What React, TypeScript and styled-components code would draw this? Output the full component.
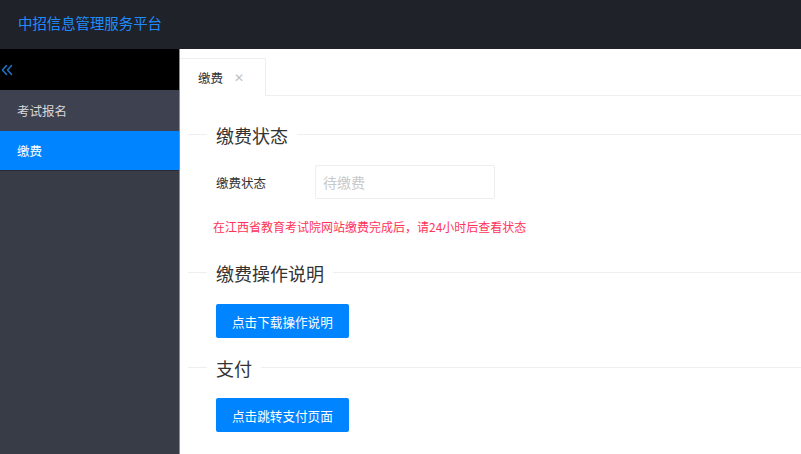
import React from "react";
import styled, { createGlobalStyle } from "styled-components";

const Global = createGlobalStyle`
  html, body { margin: 0; padding: 0; }
  body {
    font-family: "Noto Sans CJK SC", "Noto Sans", "Liberation Sans", sans-serif;
    background: #fff;
    color: #333;
  }
  * { box-sizing: border-box; }
`;

const Page = styled.div`
  width: 801px;
  height: 454px;
  display: flex;
  flex-direction: column;
  overflow: hidden;
`;

const Header = styled.header`
  height: 49px;
  flex: none;
  background: #20222a;
  display: flex;
  align-items: center;
  padding-left: 18px;
`;

const Logo = styled.div`
  color: #1e8cff;
  font-size: 14.4px;
  line-height: 20px;
  margin-top: -4px;
`;

const Body = styled.div`
  flex: 1;
  display: flex;
  min-height: 0;
`;

const Side = styled.aside`
  width: 180px;
  flex: none;
  background: #383c47;
  border-right: 1px solid #8a8d94;
  display: flex;
  flex-direction: column;
`;

const Collapse = styled.div`
  height: 41px;
  background: #000;
  display: flex;
  align-items: center;
  padding-left: 1px;
  svg { display: block; }
`;

const NavItem = styled.div<{ $active?: boolean }>`
  height: ${(p) => (p.$active ? "40px" : "41px")};
  display: flex;
  align-items: center;
  padding-left: 17px;
  font-size: 12.5px;
  color: ${(p) => (p.$active ? "#fff" : "#d8d9dc")};
  background: ${(p) => (p.$active ? "#0084ff" : "#3e4250")};
  border-bottom: ${(p) => (p.$active ? "1px solid #2a2d36" : "none")};
`;

const Main = styled.main`
  flex: 1;
  display: flex;
  flex-direction: column;
  background: #fff;
`;

const TabBar = styled.div`
  margin-top: 9px;
  height: 38px;
  display: flex;
  border-bottom: 1px solid #eeeeee;
`;

const Tab = styled.div`
  width: 86px;
  height: 38px;
  border-top: 1px solid #eeeeee;
  border-right: 1px solid #eeeeee;
  background: #fff;
  margin-bottom: -1px;
  display: flex;
  align-items: center;
  padding-left: 18px;
  font-size: 12.5px;
  color: #333;
`;

const Close = styled.span`
  margin-left: 11px;
  color: #c2c2c2;
  font-family: "DejaVu Sans", sans-serif;
  font-size: 12px;
`;

const Content = styled.div`
  padding: 27px 0 0 8px;
  display: flex;
  flex-direction: column;
`;

const Legend = styled.div<{ $mt?: number }>`
  display: flex;
  align-items: center;
  height: 24px;
  margin-top: ${(p) => p.$mt ?? 0}px;
  font-size: 18px;
  color: #333;
  &::before {
    content: "";
    width: 19px;
    height: 1px;
    background: #eeeeee;
    margin-top: -1px;
  }
  &::after {
    content: "";
    flex: 1;
    height: 1px;
    background: #eeeeee;
    margin-top: -1px;
  }
  span {
    padding: 0 9px;
  }
`;

const Inner = styled.div<{ $mt?: number }>`
  padding-left: 28px;
  margin-top: ${(p) => p.$mt ?? 0}px;
  display: flex;
  align-items: center;
`;

const Label = styled.label`
  width: 99px;
  font-size: 12.5px;
  color: #333;
`;

const Input = styled.input`
  width: 180px;
  height: 34px;
  border: 1px solid #eeeeee;
  border-radius: 2px;
  padding: 0 7px;
  font-family: inherit;
  font-size: 14px;
  color: #333;
  outline: none;
  &::placeholder { color: #c9c9c9; }
`;

const Notice = styled.div`
  margin-top: 18px;
  padding-left: 25px;
  font-size: 12px;
  line-height: 20px;
  color: #ff3358;
`;

const Button = styled.button`
  height: 34px;
  padding: 0 16px;
  border: none;
  border-radius: 2px;
  background: #0084ff;
  color: #fff;
  font-family: inherit;
  font-size: 12.6px;
  cursor: pointer;
`;

export default function App() {
  return (
    <Page>
      <Global />
      <Header>
        <Logo>中招信息管理服务平台</Logo>
      </Header>
      <Body>
        <Side>
          <Collapse>
            <svg width="12" height="12" viewBox="0 0 12 12" fill="none" stroke="#1f72c4" strokeWidth="1.6" strokeLinecap="round" strokeLinejoin="round">
              <polyline points="5.5,1.5 1.5,6 5.5,10.5" />
              <polyline points="10.5,1.5 6.5,6 10.5,10.5" />
            </svg>
          </Collapse>
          <NavItem>考试报名</NavItem>
          <NavItem $active>缴费</NavItem>
        </Side>
        <Main>
          <TabBar>
            <Tab>
              缴费<Close>✕</Close>
            </Tab>
          </TabBar>
          <Content>
            <Legend>
              <span>缴费状态</span>
            </Legend>
            <Inner $mt={18}>
              <Label>缴费状态</Label>
              <Input placeholder="待缴费" readOnly />
            </Inner>
            <Notice>在江西省教育考试院网站缴费完成后，请24小时后查看状态</Notice>
            <Legend $mt={24}>
              <span>缴费操作说明</span>
            </Legend>
            <Inner $mt={19}>
              <Button>点击下载操作说明</Button>
            </Inner>
            <Legend $mt={18}>
              <span>支付</span>
            </Legend>
            <Inner $mt={18}>
              <Button>点击跳转支付页面</Button>
            </Inner>
          </Content>
        </Main>
      </Body>
    </Page>
  );
}
